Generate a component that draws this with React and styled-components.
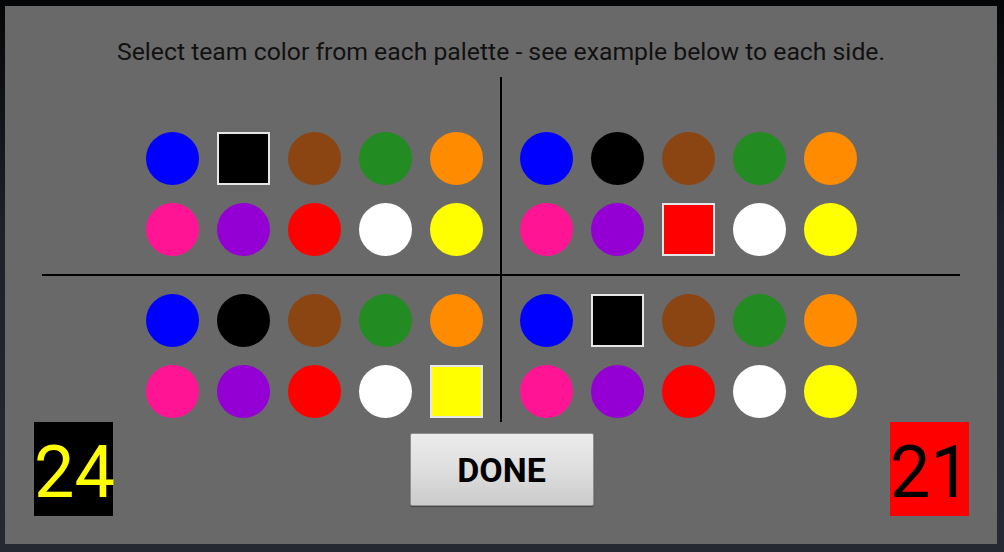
import React from "react";
import styled, { createGlobalStyle } from "styled-components";

const Global = createGlobalStyle`
  html, body { margin: 0; padding: 0; }
  body {
    width: 1004px;
    height: 552px;
    overflow: hidden;
    background: linear-gradient(180deg, #050607 0%, #1d2128 40%, #252a32 100%);
    font-family: Roboto, "Noto Sans", sans-serif;
  }
`;

const Screen = styled.div`
  width: 1004px;
  height: 552px;
  padding: 6px 7px 8px 5px;
  box-sizing: border-box;
`;

const Panel = styled.div`
  width: 992px;
  height: 538px;
  background: #696969;
  box-sizing: border-box;
  padding: 32px 0 28px;
  display: flex;
  flex-direction: column;
`;

const Title = styled.div`
  font-size: 24.75px;
  line-height: 28px;
  color: #111;
  text-align: center;
  height: 28px;
  white-space: nowrap;
`;

const Board = styled.div`
  margin: 11px auto 0;
  display: grid;
  grid-template-columns: 458px 2px 458px;
  grid-template-rows: 197px 2px 146px;
`;

const VLine = styled.div`
  background: #000;
  grid-column: 2;
  grid-row: ${(p) => p.$row};
`;

const HLine = styled.div`
  background: #000;
  grid-column: 1 / 4;
  grid-row: 2;
`;

const Cell = styled.div`
  display: flex;
  justify-content: ${(p) => (p.$side === "left" ? "flex-end" : "flex-start")};
  align-items: ${(p) => (p.$top ? "flex-end" : "flex-start")};
  padding: ${(p) =>
    `${p.$top ? 0 : 18}px ${p.$side === "left" ? 17 : 0}px ${p.$top ? 18 : 0}px ${
      p.$side === "left" ? 0 : 18
    }px`};
  grid-column: ${(p) => (p.$side === "left" ? 1 : 3)};
  grid-row: ${(p) => (p.$top ? 1 : 3)};
`;

const Palette = styled.div`
  display: grid;
  grid-template-columns: repeat(5, 53px);
  grid-auto-rows: 53px;
  gap: 18px;
`;

const Swatch = styled.div`
  width: 53px;
  height: 53px;
  box-sizing: border-box;
  background: ${(p) => p.$color};
  border-radius: ${(p) => (p.$selected ? "0" : "50%")};
  border: ${(p) => (p.$selected ? "2px solid #e6e6e6" : "none")};
`;

const BottomRow = styled.div`
  display: flex;
  justify-content: space-between;
  align-items: center;
  padding: 0 28px 0 29px;
  height: 94px;
`;

const Score = styled.div`
  width: 79px;
  height: 94px;
  box-sizing: border-box;
  padding-top: 9px;
  background: ${(p) => p.$bg};
  color: ${(p) => p.$fg};
  font-size: 72px;
  line-height: 84px;
  white-space: nowrap;
  overflow: visible;
`;

const DoneButton = styled.button`
  width: 184px;
  height: 73px;
  margin-top: 1px;
  border: 1px solid #8f8f8f;
  border-radius: 2px;
  background: linear-gradient(180deg, #ececec 0%, #dedede 50%, #cbcbcb 100%);
  box-shadow: 0 1px 1px rgba(0, 0, 0, 0.35);
  font-family: Roboto, "Noto Sans", sans-serif;
  font-weight: 700;
  font-size: 34px;
  color: #000;
  padding: 0;
  cursor: pointer;
`;

const COLORS = [
  "#0000ff",
  "#000000",
  "#8b4513",
  "#228b22",
  "#ff8c00",
  "#ff1493",
  "#9400d3",
  "#ff0000",
  "#ffffff",
  "#ffff00",
];

function PaletteView({ selected }) {
  return (
    <Palette>
      {COLORS.map((c, i) => (
        <Swatch key={i} $color={c} $selected={i === selected} />
      ))}
    </Palette>
  );
}

export default function App() {
  return (
    <>
      <Global />
      <Screen>
        <Panel>
          <Title>Select team color from each palette - see example below to each side.</Title>
          <Board>
            <Cell $side="left" $top>
              <PaletteView selected={1} />
            </Cell>
            <VLine $row={1} />
            <Cell $side="right" $top>
              <PaletteView selected={7} />
            </Cell>
            <HLine />
            <Cell $side="left">
              <PaletteView selected={9} />
            </Cell>
            <VLine $row={3} />
            <Cell $side="right">
              <PaletteView selected={1} />
            </Cell>
          </Board>
          <BottomRow>
            <Score $bg="#000" $fg="#ffff00">24</Score>
            <DoneButton>DONE</DoneButton>
            <Score $bg="#ff0000" $fg="#000">21</Score>
          </BottomRow>
        </Panel>
      </Screen>
    </>
  );
}
